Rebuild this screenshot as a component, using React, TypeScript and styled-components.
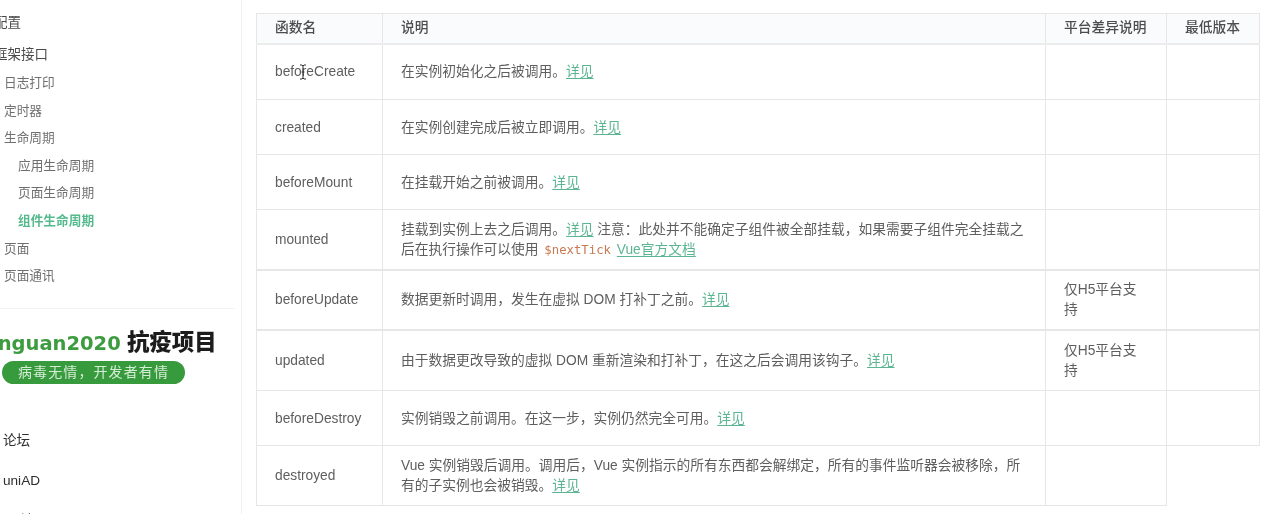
import React from 'react'
import styled, { createGlobalStyle } from 'styled-components'

const GlobalStyle = createGlobalStyle`
  html, body {
    margin: 0;
    height: 514px;
    overflow: hidden;
    background: #fff;
    font-family: "Liberation Sans", "Noto Sans CJK SC", sans-serif;
  }
`

const Page = styled.div`
  display: flex;
  width: 1269px;
  height: 514px;
  overflow: hidden;
  filter: blur(0.45px);
`

const Sidebar = styled.aside`
  flex: 0 0 241px;
  height: 514px;
  overflow: hidden;
  border-right: 1px solid #f0f0f0;
  padding-top: 13px;
  box-sizing: content-box;
`

const GroupTitle = styled.div`
  height: 20px;
  line-height: 20px;
  margin: 0 0 12px -6px;
  font-size: 13.5px;
  color: #4a4a4a;
`

const NavList = styled.div`
  margin-top: -7px;
  padding-bottom: 17px;
  border-bottom: 1px solid #f2f2f2;
  margin-right: 6px;
`

const NavItem = styled.div<{ $level: number; $active?: boolean }>`
  height: 27.6px;
  line-height: 27.6px;
  padding-left: ${(props) => (props.$level === 2 ? 18 : 4)}px;
  font-size: 12.7px;
  font-weight: ${(props) => (props.$active ? 700 : 400)};
  color: ${(props) => (props.$active ? '#54b98d' : '#6f6f6f')};
`

const Promo = styled.div`
  height: 90px;
  padding-top: 22px;
`

const PromoTitle = styled.div`
  height: 30px;
  line-height: 24px;
  margin-left: -24px;
  width: 280px;
  white-space: nowrap;
  font-size: 22.4px;
  font-weight: 900;
  color: #1c1c1c;
`

const PromoName = styled.span`
  font-family: "DejaVu Sans", sans-serif;
  font-size: 19.5px;
  font-weight: 700;
  color: #3c9c3f;
`

const PromoPill = styled.div`
  width: 183px;
  height: 23px;
  margin-left: 2px;
  border-radius: 12px;
  background: #379a3d;
  color: #d5ecd5;
  font-size: 14px;
  line-height: 23px;
  letter-spacing: 1.1px;
  text-align: center;
`

const ExtraLink = styled.div<{ $indent?: number }>`
  height: 40px;
  line-height: 40px;
  padding-left: ${(props) => props.$indent ?? 3}px;
  font-size: 13.6px;
  color: #2f2f2f;
`

const Content = styled.main`
  padding: 13px 0 0 14px;
`

const Table = styled.table`
  table-layout: fixed;
  width: 1003px;
  border-collapse: collapse;
  font-size: 13.76px;
  line-height: 20px;
  color: #5e5e5e;
`

const Col = styled.col<{ $width: number }>`
  width: ${(props) => props.$width}px;
`

const HeadRow = styled.tr`
  height: 30px;
  background: #fafbfc;
`

const HeadCell = styled.th`
  padding: 0 18px;
  border: 1px solid #e6e6e6;
  border-bottom: 2px solid #ececec;
  text-align: left;
  font-weight: 500;
  color: #4d4d4d;
`

const BodyRow = styled.tr<{ $height: number; $thick?: boolean }>`
  height: ${(props) => props.$height}px;
  & > td {
    border-bottom-width: ${(props) => (props.$thick ? 2 : 1)}px;
  }
`

const Cell = styled.td`
  padding: 1px 18px 0;
  border: 1px solid #e6e6e6;
  vertical-align: middle;
  word-break: break-all;
`

const DocLink = styled.a`
  color: #5cb592;
  text-decoration: underline;
  text-underline-offset: 2px;
`

const Code = styled.code`
  padding: 0 2px;
  font-family: "DejaVu Sans Mono", "Liberation Mono", monospace;
  font-size: 12.3px;
  color: #c77a52;
`

const CursorAnchor = styled.span`
  position: relative;
  display: inline-block;
`

const TextCursor = styled.svg`
  position: absolute;
  left: 24px;
  top: 2px;
  width: 8px;
  height: 16px;
  fill: none;
  stroke: #333;
  stroke-width: 1;
`

type RowData = {
  name: string
  height: number
  platform?: string
  noVersion?: boolean
  thick?: boolean
  desc: React.ReactNode
}

const navItems = [
  { label: '日志打印', level: 1 },
  { label: '定时器', level: 1 },
  { label: '生命周期', level: 1 },
  { label: '应用生命周期', level: 2 },
  { label: '页面生命周期', level: 2 },
  { label: '组件生命周期', level: 2, active: true },
  { label: '页面', level: 1 },
  { label: '页面通讯', level: 1 },
]

const rows: RowData[] = [
  { name: 'beforeCreate', height: 56, desc: <>在实例初始化之后被调用。<DocLink>详见</DocLink></> },
  { name: 'created', height: 55, desc: <>在实例创建完成后被立即调用。<DocLink>详见</DocLink></> },
  { name: 'beforeMount', height: 55, desc: <>在挂载开始之前被调用。<DocLink>详见</DocLink></> },
  {
    name: 'mounted',
    height: 60,
    thick: true,
    desc: (
      <>
        挂载到实例上去之后调用。<DocLink>详见</DocLink> 注意：此处并不能确定子组件被全部挂载，如果需要子组件完全挂载之后在执行操作可以使用{' '}
        <Code>$nextTick</Code> <DocLink>Vue官方文档</DocLink>
      </>
    ),
  },
  {
    name: 'beforeUpdate',
    height: 60,
    platform: '仅H5平台支持',
    thick: true,
    desc: <>数据更新时调用，发生在虚拟 DOM 打补丁之前。<DocLink>详见</DocLink></>,
  },
  {
    name: 'updated',
    height: 61,
    platform: '仅H5平台支持',
    desc: <>由于数据更改导致的虚拟 DOM 重新渲染和打补丁，在这之后会调用该钩子。<DocLink>详见</DocLink></>,
  },
  { name: 'beforeDestroy', height: 55, desc: <>实例销毁之前调用。在这一步，实例仍然完全可用。<DocLink>详见</DocLink></> },
  {
    name: 'destroyed',
    height: 60,
    noVersion: true,
    desc: (
      <>
        Vue 实例销毁后调用。调用后，Vue 实例指示的所有东西都会解绑定，所有的事件监听器会被移除，所有的子实例也会被销毁。<DocLink>详见</DocLink>
      </>
    ),
  },
]

export default function App() {
  return (
    <>
      <GlobalStyle />
      <Page>
        <Sidebar>
          <GroupTitle>配置</GroupTitle>
          <GroupTitle>框架接口</GroupTitle>
          <NavList>
            {navItems.map((item) => (
              <NavItem key={item.label} $level={item.level} $active={item.active}>
                {item.label}
              </NavItem>
            ))}
          </NavList>
          <Promo>
            <PromoTitle>
              <PromoName>Xinguan2020</PromoName> 抗疫项目
            </PromoTitle>
            <PromoPill>病毒无情，开发者有情</PromoPill>
          </Promo>
          <ExtraLink>论坛</ExtraLink>
          <ExtraLink>uniAD</ExtraLink>
          <ExtraLink $indent={20}>社区</ExtraLink>
        </Sidebar>
        <Content>
          <Table>
            <colgroup>
              <Col $width={126} />
              <Col $width={663} />
              <Col $width={121} />
              <Col $width={93} />
            </colgroup>
            <thead>
              <HeadRow>
                <HeadCell>函数名</HeadCell>
                <HeadCell>说明</HeadCell>
                <HeadCell>平台差异说明</HeadCell>
                <HeadCell>最低版本</HeadCell>
              </HeadRow>
            </thead>
            <tbody>
              {rows.map((row) => (
                <BodyRow key={row.name} $height={row.height} $thick={row.thick}>
                  <Cell>
                    {row.name === 'beforeCreate' ? (
                      <CursorAnchor>
                        {row.name}
                        <TextCursor viewBox="0 0 8 16" aria-hidden="true">
                          <path d="M1 1h2l1 1 1-1h2M4 2v12M1 15h2l1-1 1 1h2M2.5 8h3" />
                        </TextCursor>
                      </CursorAnchor>
                    ) : (
                      row.name
                    )}
                  </Cell>
                  <Cell>{row.desc}</Cell>
                  <Cell>{row.platform}</Cell>
                  {!row.noVersion && <Cell />}
                </BodyRow>
              ))}
            </tbody>
          </Table>
        </Content>
      </Page>
    </>
  )
}
